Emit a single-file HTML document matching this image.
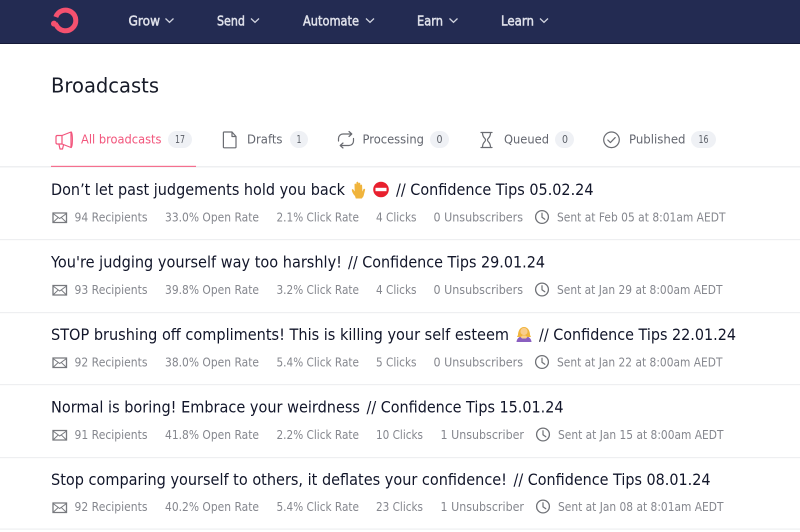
<!DOCTYPE html>
<html><head><meta charset="utf-8"><style>
html,body{margin:0;padding:0;background:#fff;width:800px;height:532px;overflow:hidden}
svg{display:block;position:absolute;left:0;top:0;filter:blur(.25px)}
text{font-family:"DejaVu Sans","Liberation Sans",sans-serif}
.n{font-size:13px;fill:#dfe1ea;stroke:#dfe1ea;stroke-width:.5px}
.t{font-size:12.8px;fill:#63666f}
.b{font-size:10.5px;fill:#5c6068}
.h{font-size:15.6px;fill:#12162a}
.m{font-size:12.8px;fill:#85878e;transform:translateY(-.5px)}
.i{fill:none;stroke:#6a6c72;stroke-width:1.2;stroke-linecap:round;stroke-linejoin:round}
</style></head><body>
<svg width="800" height="532" viewBox="0 0 800 532">
<defs>
<g id="mail"><path d="M1 1.500h13.500v9.500H1z" fill="none" stroke="#77797e" stroke-width="1.300"/><path d="M1 2l6.700 5 6.800-5M1 11l5-4.800M14.500 11l-5-4.800" fill="none" stroke="#77797e" stroke-width="1"/></g>
<g id="clock"><circle cx="7" cy="7" r="6.400" fill="none" stroke="#6f7176" stroke-width="1.300"/><path d="M7 3.200V7.300l2.800 2" fill="none" stroke="#6f7176" stroke-width="1.200" stroke-linecap="round"/></g>
<path id="chev" d="M0 0l4 3.800L8 0" fill="none" stroke="#d0d3df" stroke-width="1.300"/>
</defs>

<rect width="800" height="43" fill="#232b52"/>
<rect y="43" width="800" height="1" fill="#151a38"/>
<path d="M55.800 17A10.300 10.300 0 1 1 56.200 24.900" fill="none" stroke="#f4516f" stroke-width="5"/>
<circle cx="54" cy="23.600" r="3" fill="#f4516f"/>
<path d="M53 23.500L58 22.500 58.500 27 55 27z" fill="#f4516f"/>

<text class="n" x="128.500" y="25.500" textLength="31.500" lengthAdjust="spacingAndGlyphs">Grow</text><use href="#chev" x="165.500" y="18.500"/>
<text class="n" x="217" y="25.500" textLength="28" lengthAdjust="spacingAndGlyphs">Send</text><use href="#chev" x="251" y="18.500"/>
<text class="n" x="303" y="25.500" textLength="56" lengthAdjust="spacingAndGlyphs">Automate</text><use href="#chev" x="366" y="18.500"/>
<text class="n" x="417" y="25.500" textLength="26" lengthAdjust="spacingAndGlyphs">Earn</text><use href="#chev" x="449.500" y="18.500"/>
<text class="n" x="501" y="25.500" textLength="33" lengthAdjust="spacingAndGlyphs">Learn</text><use href="#chev" x="540" y="18.500"/>

<text x="51" y="92.500" font-size="20.500" fill="#171b28" textLength="108" lengthAdjust="spacingAndGlyphs">Broadcasts</text>

<rect y="166" width="800" height="1.500" fill="#eeeff1"/>
<rect x="51" y="165.800" width="145" height="1.200" fill="#f4708f"/>

<g fill="none" stroke="#f2557c" stroke-width="1.200" stroke-linejoin="round"><path d="M57 135.500h5l9-3.500v15.500l-9-3.500h-5a1.500 1.500 0 0 1-1-1.500v-5.500a1.500 1.500 0 0 1 1-1.500z"/><path d="M62 135.500v9M71 132c1.800 0 1.800 15.500 0 15.500M59 144.500l1 4.500h2.500l1-4"/></g>
<text class="t" x="81" y="143.500" textLength="80.500" lengthAdjust="spacingAndGlyphs" style="fill:#f2557c">All broadcasts</text>
<rect x="168" y="131" width="24" height="17" rx="8.500" fill="#eff1f5"/><text class="b" x="175" y="143" textLength="10" lengthAdjust="spacingAndGlyphs">17</text>

<path class="i" d="M224 132h8l4 4.500V147a.8.800 0 0 1-.8.800h-11a.8.800 0 0 1-.8-.8v-14a.8.800 0 0 1 .6-1zM232 132v4.500h4"/>
<text class="t" x="247" y="143.500" textLength="35.500" lengthAdjust="spacingAndGlyphs">Drafts</text>
<rect x="290" y="131" width="18" height="17" rx="8.500" fill="#eff1f5"/><text class="b" x="296.500" y="143" textLength="5" lengthAdjust="spacingAndGlyphs">1</text>

<path class="i" d="M338.500 141v-2.500a4.500 4.500 0 0 1 4.500-4.500h8.500M349 131.500l2.800 2.500-2.800 2.500M353.500 138.500v2.500a4.500 4.500 0 0 1-4.500 4.500h-8.500M343 148l-2.800-2.500 2.800-2.500"/>
<text class="t" x="362.500" y="143.500" textLength="61.500" lengthAdjust="spacingAndGlyphs">Processing</text>
<rect x="430" y="131" width="19" height="17" rx="8.500" fill="#eff1f5"/><text class="b" x="436.500" y="143" textLength="6" lengthAdjust="spacingAndGlyphs">0</text>

<path class="i" d="M481 132.500h11M481 147.500h11M482.500 132.500c0 6 3 5 3 7.500s-3 1.500-3 7.500M490.500 132.500c0 6-3 5-3 7.500s3 1.500 3 7.500"/>
<text class="t" x="504" y="143.500" textLength="45" lengthAdjust="spacingAndGlyphs">Queued</text>
<rect x="555" y="131" width="19" height="17" rx="8.500" fill="#eff1f5"/><text class="b" x="562" y="143" textLength="6" lengthAdjust="spacingAndGlyphs">0</text>

<circle class="i" cx="611.500" cy="139.800" r="7.800"/><path class="i" d="M607.800 140l2.600 2.600 4.800-5"/>
<text class="t" x="629" y="143.500" textLength="56.500" lengthAdjust="spacingAndGlyphs">Published</text>
<rect x="691" y="131" width="25" height="17" rx="8.500" fill="#eff1f5"/><text class="b" x="698.500" y="143" textLength="10" lengthAdjust="spacingAndGlyphs">16</text>

<g fill="#eeeff1"><rect y="239" width="800" height="1.200"/><rect y="312" width="800" height="1.200"/><rect y="384" width="800" height="1.200"/><rect y="457" width="800" height="1.200"/><rect y="528.500" width="800" height="1.200"/></g>

<text class="h" x="51" y="195" textLength="294" lengthAdjust="spacingAndGlyphs">Don’t let past judgements hold you back</text>
<path d="M355 196c-1.500-1.500-3-4-3.200-6-.1-1 1.200-1.200 1.700-.3l1.200 1.800-.2-7c0-1.200 1.500-1.200 1.700 0l.3-2c.2-1 1.700-1 1.800 0l.2 1c.2-1 1.700-1 1.800.2l.1 1.500c.4-.8 1.700-.7 1.700.4l.3 6 1-2.300c.5-1 2-.6 1.700.6l-1.600 6.300-1.700 2.300h-6z" fill="#f0b43c"/>
<circle cx="381" cy="189.500" r="7.800" fill="#e8202e"/><rect x="375.500" y="187.800" width="11" height="3.400" fill="#fff"/>
<text class="h" x="396" y="195" textLength="197.500" lengthAdjust="spacingAndGlyphs">// Confidence Tips 05.02.24</text>

<text class="h" x="51" y="267.500" textLength="291" lengthAdjust="spacingAndGlyphs">You're judging yourself way too harshly!</text>
<text class="h" x="348" y="267.500" textLength="197" lengthAdjust="spacingAndGlyphs">// Confidence Tips 29.01.24</text>

<text class="h" x="51" y="340" textLength="458" lengthAdjust="spacingAndGlyphs">STOP brushing off compliments! This is killing your self esteem</text>
<path d="M516.500 342c.2-3 2-5 5-5.500h5c3 .5 4.800 2.500 5 5.500z" fill="#8a5fc0"/>
<path d="M518 335c0-4 2-8 6-8s6 4 6 8l1 2h-14z" fill="#f0b43c"/>
<circle cx="524" cy="331.500" r="3.600" fill="#f9cd8d"/>
<path d="M520.500 337l2-1.500h3l2 1.500-1.500 1.500h-4z" fill="#f9cd8d"/>
<text class="h" x="539" y="340" textLength="197" lengthAdjust="spacingAndGlyphs">// Confidence Tips 22.01.24</text>

<text class="h" x="51" y="412.500" textLength="309" lengthAdjust="spacingAndGlyphs">Normal is boring! Embrace your weirdness</text>
<text class="h" x="366.500" y="412.500" textLength="197" lengthAdjust="spacingAndGlyphs">// Confidence Tips 15.01.24</text>

<text class="h" x="51" y="485" textLength="456" lengthAdjust="spacingAndGlyphs">Stop comparing yourself to others, it deflates your confidence!</text>
<text class="h" x="513.500" y="485" textLength="197" lengthAdjust="spacingAndGlyphs">// Confidence Tips 08.01.24</text>

<use href="#mail" x="52" y="211.500"/>
<text class="m" x="74.500" y="222" textLength="73" lengthAdjust="spacingAndGlyphs">94 Recipients</text>
<text class="m" x="165" y="222" textLength="94" lengthAdjust="spacingAndGlyphs">33.0% Open Rate</text>
<text class="m" x="276.500" y="222" textLength="82.500" lengthAdjust="spacingAndGlyphs">2.1% Click Rate</text>
<text class="m" x="376" y="222" textLength="40.500" lengthAdjust="spacingAndGlyphs">4 Clicks</text>
<text class="m" x="433.500" y="222" textLength="89.500" lengthAdjust="spacingAndGlyphs">0 Unsubscribers</text>
<use href="#clock" x="535" y="210"/>
<text class="m" x="557" y="222" textLength="168.500" lengthAdjust="spacingAndGlyphs">Sent at Feb 05 at 8:01am AEDT</text>

<use href="#mail" x="52" y="284"/>
<text class="m" x="74.500" y="294.500" textLength="73" lengthAdjust="spacingAndGlyphs">93 Recipients</text>
<text class="m" x="165" y="294.500" textLength="94" lengthAdjust="spacingAndGlyphs">39.8% Open Rate</text>
<text class="m" x="276.500" y="294.500" textLength="82.500" lengthAdjust="spacingAndGlyphs">3.2% Click Rate</text>
<text class="m" x="376" y="294.500" textLength="40.500" lengthAdjust="spacingAndGlyphs">4 Clicks</text>
<text class="m" x="433.500" y="294.500" textLength="89.500" lengthAdjust="spacingAndGlyphs">0 Unsubscribers</text>
<use href="#clock" x="535" y="282.500"/>
<text class="m" x="557" y="294.500" textLength="165.500" lengthAdjust="spacingAndGlyphs">Sent at Jan 29 at 8:00am AEDT</text>

<use href="#mail" x="52" y="356.500"/>
<text class="m" x="74.500" y="367" textLength="73" lengthAdjust="spacingAndGlyphs">92 Recipients</text>
<text class="m" x="165" y="367" textLength="94" lengthAdjust="spacingAndGlyphs">38.0% Open Rate</text>
<text class="m" x="276.500" y="367" textLength="82.500" lengthAdjust="spacingAndGlyphs">5.4% Click Rate</text>
<text class="m" x="376" y="367" textLength="40.500" lengthAdjust="spacingAndGlyphs">5 Clicks</text>
<text class="m" x="433.500" y="367" textLength="89.500" lengthAdjust="spacingAndGlyphs">0 Unsubscribers</text>
<use href="#clock" x="535" y="355"/>
<text class="m" x="557" y="367" textLength="165.500" lengthAdjust="spacingAndGlyphs">Sent at Jan 22 at 8:00am AEDT</text>

<use href="#mail" x="52" y="429"/>
<text class="m" x="74.500" y="439.500" textLength="73" lengthAdjust="spacingAndGlyphs">91 Recipients</text>
<text class="m" x="165" y="439.500" textLength="94" lengthAdjust="spacingAndGlyphs">41.8% Open Rate</text>
<text class="m" x="276.500" y="439.500" textLength="82.500" lengthAdjust="spacingAndGlyphs">2.2% Click Rate</text>
<text class="m" x="376" y="439.500" textLength="47" lengthAdjust="spacingAndGlyphs">10 Clicks</text>
<text class="m" x="440.500" y="439.500" textLength="83.500" lengthAdjust="spacingAndGlyphs">1 Unsubscriber</text>
<use href="#clock" x="536" y="427.500"/>
<text class="m" x="558" y="439.500" textLength="165.500" lengthAdjust="spacingAndGlyphs">Sent at Jan 15 at 8:00am AEDT</text>

<use href="#mail" x="52" y="501.500"/>
<text class="m" x="74.500" y="511.500" textLength="73" lengthAdjust="spacingAndGlyphs">92 Recipients</text>
<text class="m" x="165" y="511.500" textLength="94" lengthAdjust="spacingAndGlyphs">40.2% Open Rate</text>
<text class="m" x="276.500" y="511.500" textLength="82.500" lengthAdjust="spacingAndGlyphs">5.4% Click Rate</text>
<text class="m" x="376" y="511.500" textLength="47" lengthAdjust="spacingAndGlyphs">23 Clicks</text>
<text class="m" x="440.500" y="511.500" textLength="83.500" lengthAdjust="spacingAndGlyphs">1 Unsubscriber</text>
<use href="#clock" x="536" y="499.500"/>
<text class="m" x="558" y="511.500" textLength="165.500" lengthAdjust="spacingAndGlyphs">Sent at Jan 08 at 8:01am AEDT</text>
</svg>
</body></html>
